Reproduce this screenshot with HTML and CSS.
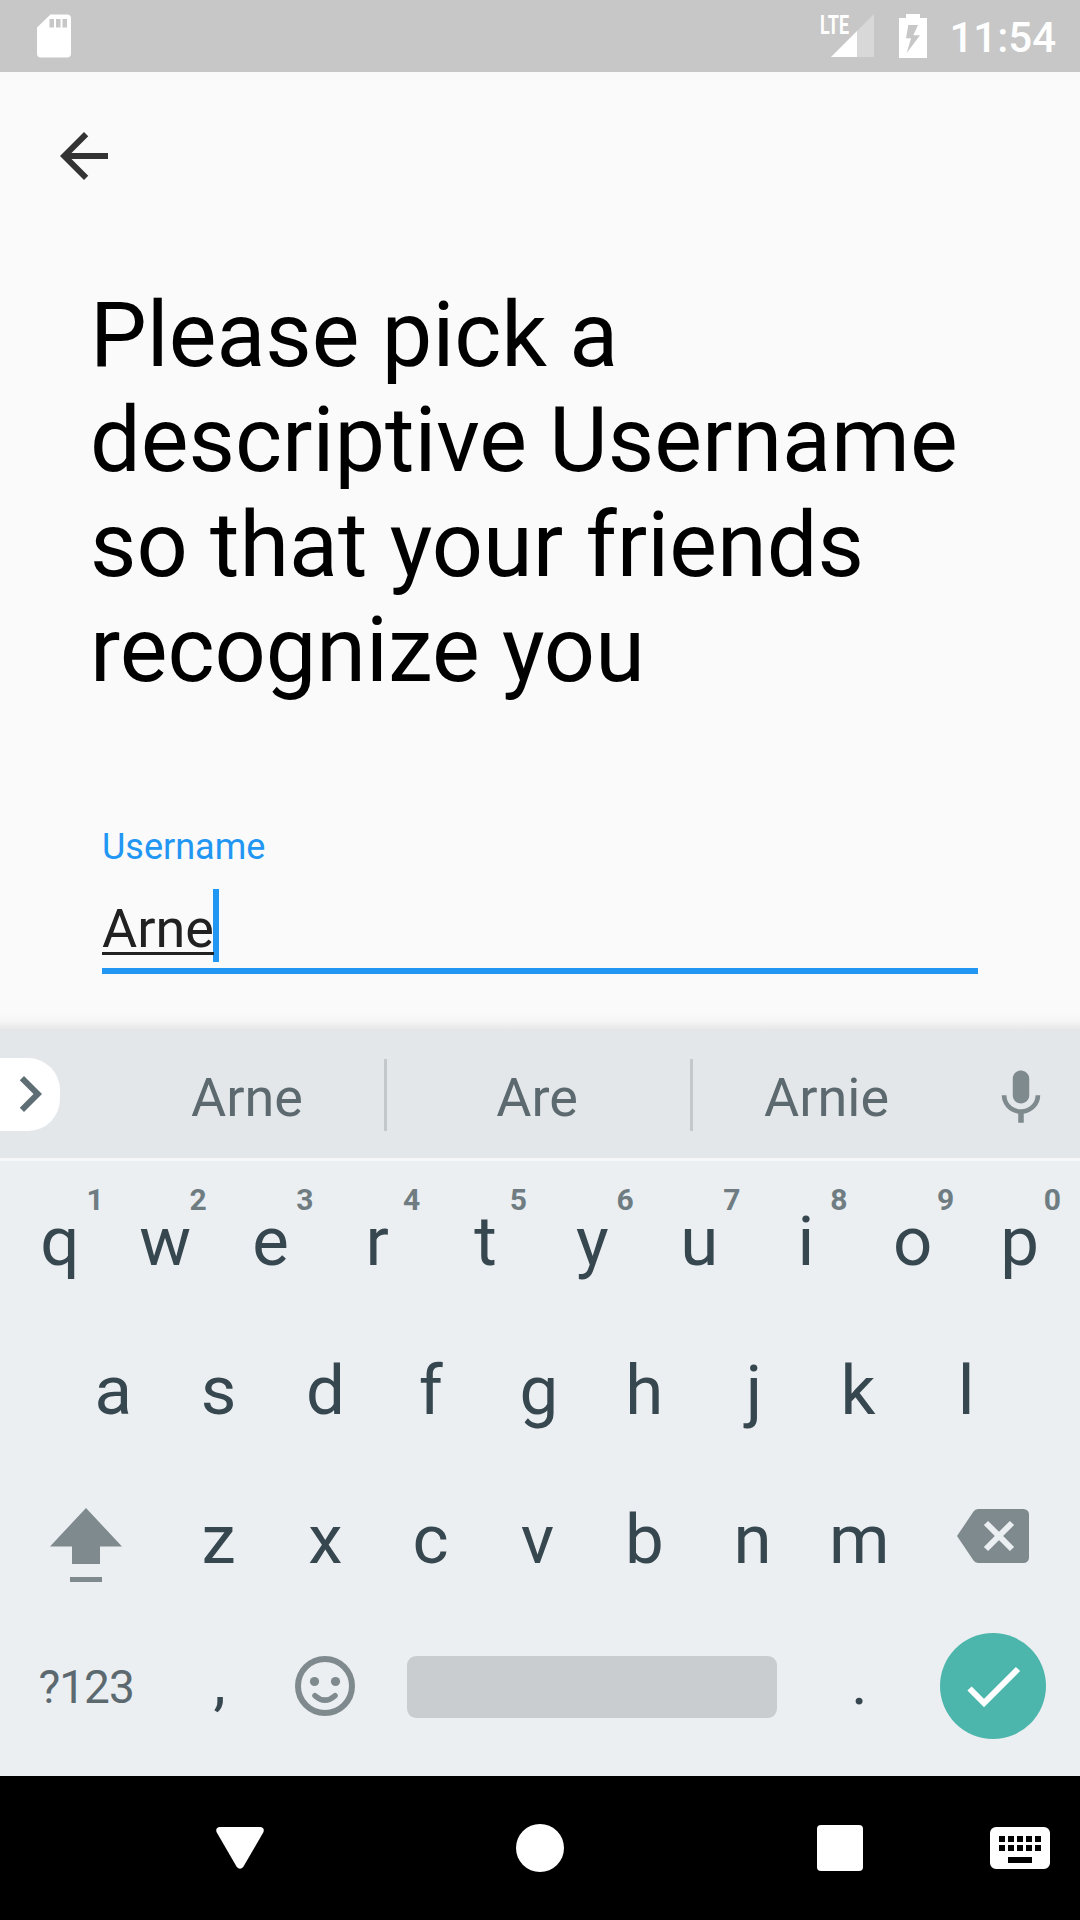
FILE: index.html
```html
<!DOCTYPE html>
<html lang="en">
<head>
<meta charset="utf-8">
<title>Pick a username</title>
<link rel="stylesheet" href="styles.css">
</head>
<body>
<header class="status">
  <svg class="status-sd" width="36" height="44" viewBox="0 0 36 44"><path fill="#fff" fill-rule="evenodd" d="M14.500 0.500H31a4 4 0 0 1 4 4V39.500a4 4 0 0 1-4 4H5a4 4 0 0 1-4-4V13.500zM13.500 5v8.500h4.500V5zM20 5v8.500h4.500V5zM26.500 5v8.500h4.500V5z"/></svg>
  <div class="status-right">
    <svg class="signal" width="58" height="44" viewBox="-4 0 58 44">
      <path fill="#d8d8d8" d="M54 0V43H37V17z"/>
      <path fill="#fff" d="M11 43L37 17V43z"/>
      <text class="lte" x="0" y="19.500" textLength="29" lengthAdjust="spacingAndGlyphs">LTE</text>
    </svg>
    <svg class="battery" width="28" height="44" viewBox="0 0 28 44"><path fill="#fff" fill-rule="evenodd" d="M7 0H21V4H28V44H0V4H7zM9.300 11L7 24.300H12L7.700 39L21 21.300H14.300L19 11z"/></svg>
    <span class="clock">11:54</span>
  </div>
</header>
<main class="page">
  <svg class="back" width="72" height="72" viewBox="0 0 24 24"><path fill="#333" d="M20 11H7.830l5.590-5.590L12 4l-8 8 8 8 1.410-1.410L7.830 13H20v-2z"/></svg>
  <h1 class="title">Please pick a descriptive Username so that your friends recognize you</h1>
  <div class="field">
    <div class="field-label">Username</div>
    <div class="field-input"><span class="field-text">Arne</span><span class="caret"></span></div>
  </div>
</main>
<div class="shade"></div>
<section class="keyboard">
  <div class="suggest">
    <div class="expand"><svg width="72" height="72" viewBox="0 0 24 24"><path fill="#5f6e74" d="M10 6L8.590 7.410 13.170 12l-4.580 4.590L10 18l6-6z"/></svg></div>
    <div class="word first">Arne</div>
    <div class="word middle">Are</div>
    <div class="word last">Arnie</div>
    <svg class="mic" width="66" height="66" viewBox="0 0 24 24"><path fill="#7f8a8f" d="M12 14c1.660 0 3-1.340 3-3V5c0-1.660-1.340-3-3-3S9 3.340 9 5v6c0 1.660 1.340 3 3 3zM17.300 11c0 3-2.540 5.100-5.300 5.100S6.700 14 6.700 11H5c0 3.410 2.720 6.230 6 6.720V21h2v-3.280c3.280-.48 6-3.300 6-6.720h-1.700z"/></svg>
  </div>
  <div class="keys">
    <div class="row row-top">
      <div class="key nudge-right">q<span class="hint hint-one">1</span></div>
      <div class="key">w<span class="hint">2</span></div>
      <div class="key nudge-left">e<span class="hint">3</span></div>
      <div class="key nudge-left">r<span class="hint">4</span></div>
      <div class="key">t<span class="hint">5</span></div>
      <div class="key">y<span class="hint">6</span></div>
      <div class="key">u<span class="hint">7</span></div>
      <div class="key">i<span class="hint">8</span></div>
      <div class="key">o<span class="hint">9</span></div>
      <div class="key">p<span class="hint">0</span></div>
    </div>
    <div class="row row-home">
      <div class="key nudge-right">a</div><div class="key">s</div><div class="key">d</div><div class="key nudge-left">f</div><div class="key">g</div><div class="key nudge-left">h</div><div class="key nudge-right">j</div><div class="key nudge-left">k</div><div class="key">l</div>
    </div>
    <div class="row row-lower">
      <div class="key shift"><svg width="72" height="75" viewBox="0 0 72 75"><path fill="#7f8a8f" d="M36 0L72 38.500H50V56H22V38.500H0zM20 69H52V74H20z"/></svg></div>
      <div class="key">z</div><div class="key">x</div><div class="key nudge-left">c</div><div class="key nudge-left">v</div><div class="key nudge-left">b</div><div class="key">n</div><div class="key">m</div>
      <div class="key delete"><svg width="72" height="54" viewBox="0 0 72 54"><path fill="#7f8a8f" d="M21 0H66.500a5.500 5.500 0 0 1 5.500 5.500V48.500a5.500 5.500 0 0 1-5.500 5.500H21a6 6 0 0 1-4.500-2.600L0 27 16.500 2.600A6 6 0 0 1 21 0z"/><path stroke="#ebeff2" stroke-width="6" d="M29 14L55 40M55 14L29 40"/></svg></div>
    </div>
    <div class="row row-bottom">
      <div class="key mode">?123</div>
      <div class="key punct comma">,</div>
      <div class="key emoji"><svg width="60" height="60" viewBox="0 0 60 60"><circle cx="30" cy="30" r="27" fill="none" stroke="#7f8a8f" stroke-width="6"/><circle cx="19.500" cy="25.500" r="4.600" fill="#7f8a8f"/><circle cx="40.500" cy="25.500" r="4.600" fill="#7f8a8f"/><path fill="none" stroke="#7f8a8f" stroke-width="5.500" stroke-linecap="round" d="M20 39.700Q30 48.700 40 39.700"/></svg></div>
      <div class="key"><div class="space"></div></div>
      <div class="key punct">.</div>
      <div class="key done"><svg width="106" height="106" viewBox="0 0 106 106"><circle cx="53" cy="53" r="53" fill="#4db6ac"/><path fill="none" stroke="#fff" stroke-width="6" d="M29.500 55.500L44 70L78 36"/></svg></div>
    </div>
  </div>
</section>
<nav class="navbar">
  <svg width="48" height="42" viewBox="0 0 48 42"><path fill="#fff" d="M4 0H44Q48.800 0.500 47.500 5L27.200 40Q24 43.500 20.800 40L0.500 5Q-0.800 0.500 4 0z"/></svg>
  <svg width="48" height="48" viewBox="0 0 48 48"><circle cx="24" cy="24" r="24" fill="#fff"/></svg>
  <svg width="46" height="46" viewBox="0 0 46 46"><rect width="46" height="46" rx="4" fill="#fff"/></svg>
  <svg class="ime" width="60" height="42" viewBox="0 0 60 42"><path fill="#fff" fill-rule="evenodd" d="M6 0H54a6 6 0 0 1 6 6V36a6 6 0 0 1-6 6H6a6 6 0 0 1-6-6V6a6 6 0 0 1 6-6zM9 9v6h6V9zM18 9v6h6V9zM27 9v6h6V9zM36 9v6h6V9zM45 9v6h6V9zM9 18v6h6v-6zM18 18v6h6v-6zM27 18v6h6v-6zM36 18v6h6v-6zM45 18v6h6v-6zM18 30v6h24v-6z"/></svg>
</nav>
</body>
</html>
```
FILE: styles.css
```css
* { box-sizing: border-box; }

body {
  margin: 0;
  width: 1080px;
  height: 1920px;
  display: flex;
  flex-direction: column;
  overflow: hidden;
  background: #fafafa;
  font-family: Roboto, sans-serif;
}

svg { display: block; flex: none; }

/* Status bar */
.status {
  height: 72px;
  flex: none;
  display: flex;
  justify-content: space-between;
  align-items: flex-start;
  padding: 14px 24px 0 36px;
  background: #c7c7c7;
  color: #fff;
}
.status-right { display: flex; align-items: flex-start; }
.signal { overflow: visible; }
.lte { font: 700 26px Roboto, sans-serif; fill: #fff; }
.battery { margin: 0 22px 0 25px; }
.clock { font-size: 42px; font-weight: 500; line-height: 48px; }

/* Page content */
.page { height: 942px; flex: none; padding: 48px 90px 0; }
.back { margin-left: -42px; }
.title {
  margin: 91px 0 0;
  font-size: 90px;
  font-weight: 400;
  line-height: 105px;
  color: #000;
}
.field { margin: 123px 12px 0; }
.field-label { font-size: 36px; line-height: 42px; color: #2196f3; }
.field-input {
  height: 106px;
  padding-top: 21px;
  display: flex;
  align-items: flex-start;
  border-bottom: 6px solid #2196f3;
}
.field-text {
  position: relative;
  z-index: 1;
  font-size: 54px;
  line-height: 79px;
  color: #212121;
  text-decoration: underline;
  text-decoration-thickness: 3px;
  text-underline-offset: 5px;
  text-decoration-skip-ink: none;
}
.caret { width: 6px; height: 73px; margin-left: -1px; background: #2196f3; }
.shade { height: 15px; flex: none; background: linear-gradient(#fafafa, #f5f5f5 50%, #e8e8e8); }

/* Keyboard */
.keyboard { height: 747px; flex: none; background: #ebeff2; }
.suggest {
  height: 132px;
  display: grid;
  grid-template-columns: 108px 279px 306px 267px 120px;
  align-items: center;
  background: #e3e7ea;
  border-bottom: 3px solid #f5f7f9;
}
.expand {
  width: 60px;
  height: 73px;
  margin-top: 2px;
  overflow: hidden;
  background: #fff;
  border-radius: 0 32px 32px 0;
}
.expand svg { margin-left: -6px; }
.word {
  height: 72px;
  margin-top: 2px;
  padding-top: 1px;
  font-size: 54px;
  line-height: 76px;
  text-align: center;
  color: #5c6a70;
  border-right: 3px solid #c3c8cb;
}
.word.first { padding-left: 2px; }
.word.middle { padding-right: 3px; }
.word.last { border-right: 0; }
.mic { margin: 9px 0 0 28px; }

.keys { padding-top: 6px; }
.row { height: 149px; display: grid; grid-template-rows: 149px; }
.row-top { padding-left: 5px; grid-template-columns: repeat(10, 106.8px); }
.row-home { padding-left: 58.4px; grid-template-columns: repeat(9, 106.8px); }
.row-lower { padding-left: 5px; grid-template-columns: 160.2px repeat(7, 106.8px) 160.2px; }
.row-bottom { padding-left: 5px; grid-template-columns: 160.2px 106.8px 106.8px 427.2px 106.8px 160.2px; }
.key {
  position: relative;
  display: flex;
  align-items: center;
  justify-content: center;
  font-size: 69px;
  line-height: 81px;
  color: #37474f;
}
.nudge-right { padding-left: 3px; }
.nudge-left { padding-right: 3px; }
.hint {
  position: absolute;
  right: 12px;
  top: 15px;
  font-size: 30px;
  font-weight: 700;
  line-height: 36px;
  color: #6f7d82;
}
.hint-one { right: 8px; }
.shift { padding: 12px 0 0 2px; }
.delete { padding-bottom: 7px; }
.mode { font-size: 46px; letter-spacing: -1px; padding: 0 0 3px 2px; color: #5c6a70; }
.punct { font-size: 62px; padding-bottom: 12px; }
.comma { padding-left: 2px; }
.emoji, .done { padding-bottom: 5px; }
.space { width: 370px; height: 62px; margin-bottom: 3px; border-radius: 9px; background: #c9cdd0; }

/* Navigation bar */
.navbar {
  height: 144px;
  flex: none;
  display: grid;
  grid-template-columns: 90px repeat(3, 300px) 90px;
  align-items: center;
  justify-items: center;
  background: #000;
}
.navbar svg:first-child { grid-column: 2; }
.ime { justify-self: end; margin-right: 30px; }
```
